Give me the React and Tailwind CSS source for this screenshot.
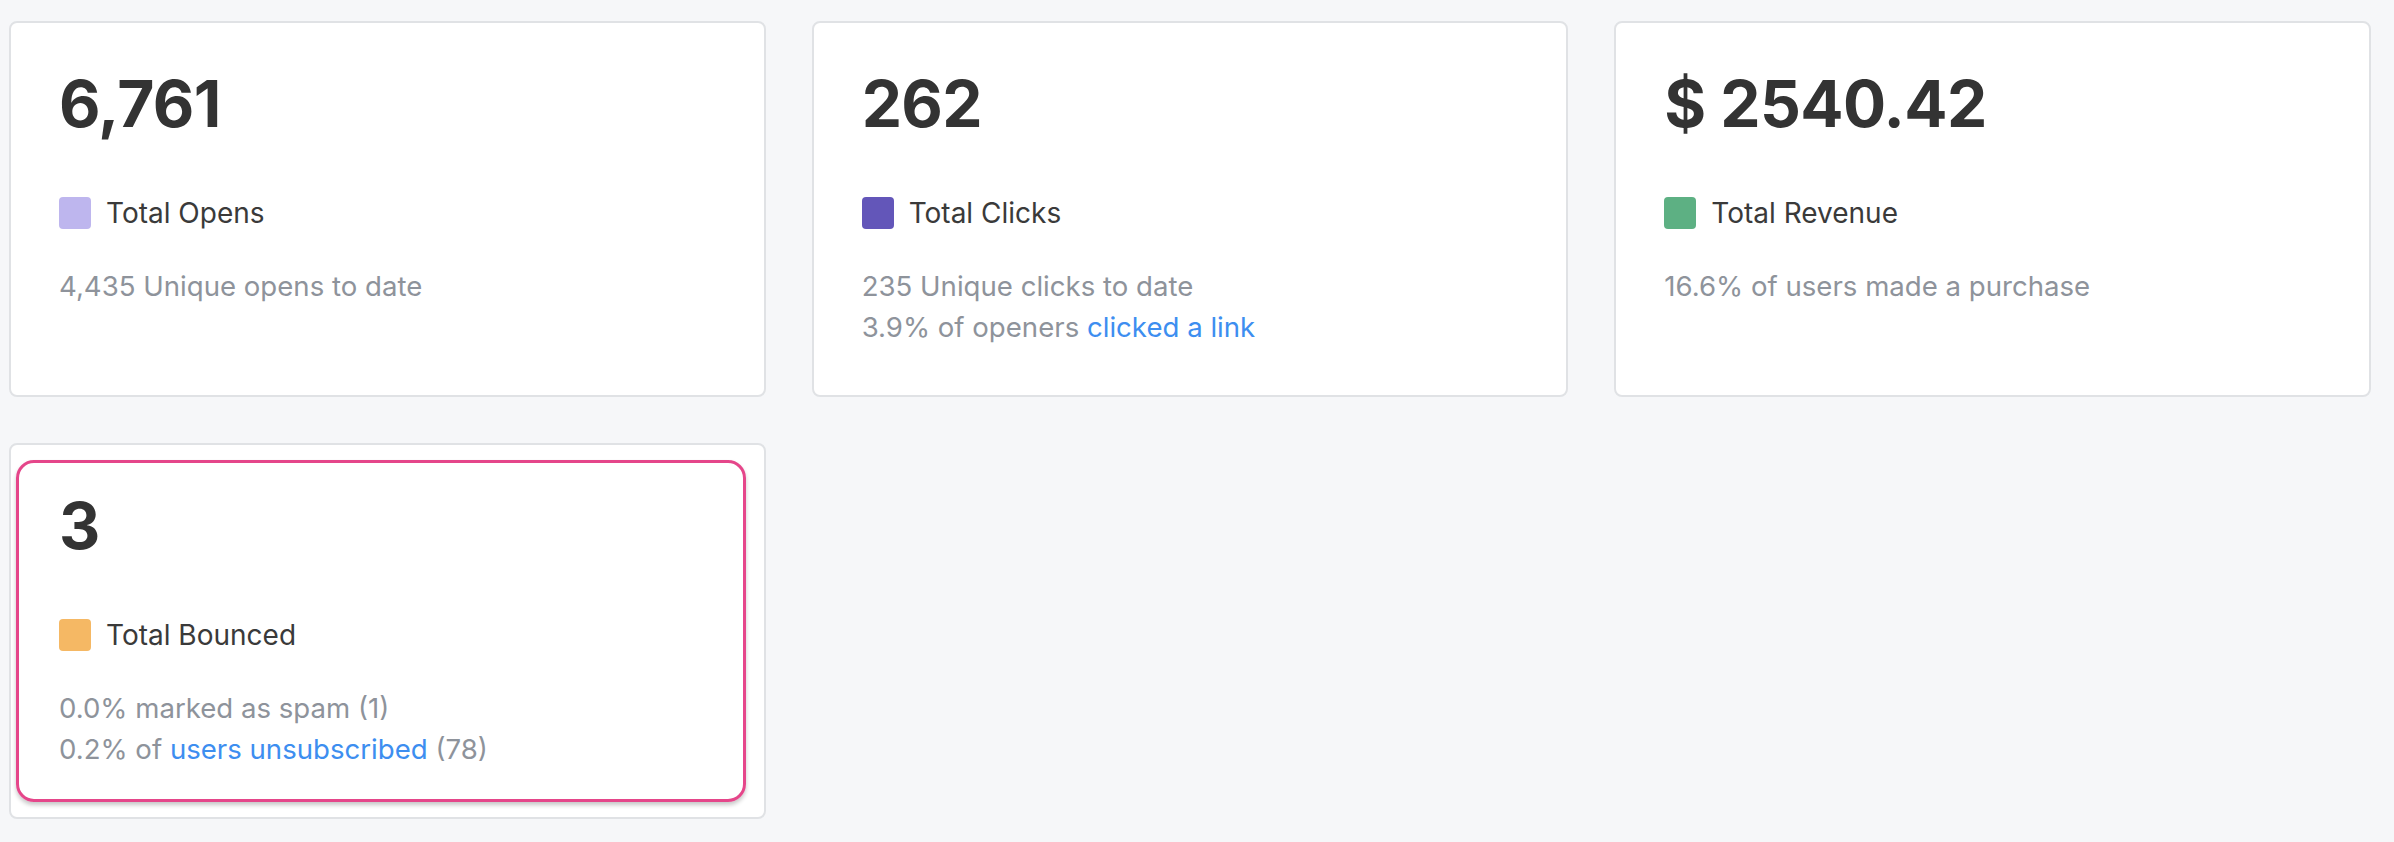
const cards = [
  {
    value: "6,761",
    label: "Total Opens",
    swatch: "bg-[#beb6ee]",
    lines: [[{ text: "4,435 Unique opens to date" }]],
  },
  {
    value: "262",
    label: "Total Clicks",
    swatch: "bg-[#6356b9]",
    lines: [
      [{ text: "235 Unique clicks to date" }],
      [{ text: "3.9% of openers " }, { text: "clicked a link", link: true }],
    ],
  },
  {
    value: "$ 2540.42",
    label: "Total Revenue",
    swatch: "bg-[#5db083]",
    lines: [[{ text: "16.6% of users made a purchase" }]],
  },
  {
    value: "3",
    label: "Total Bounced",
    swatch: "bg-[#f5b864]",
    highlighted: true,
    lines: [
      [{ text: "0.0% marked as spam (1)" }],
      [
        { text: "0.2% of " },
        { text: "users unsubscribed", link: true },
        { text: " (78)" },
      ],
    ],
  },
];

function StatCard({ card }) {
  return (
    <div className="relative h-[376px] rounded-lg border-2 border-[#e0e2e5] bg-white pl-[48px] pt-[49px]">
      {/* highlight outline drawn over the card */}
      {card.highlighted && (
        <div className="pointer-events-none absolute left-[5px] right-[18px] top-[15px] bottom-[15px] rounded-[18px] border-[3px] border-[#e5468a] shadow-[0_3px_4px_rgba(0,0,0,0.22)]" />
      )}
      <div className="text-[64px] font-bold leading-none tracking-[-0.6px] text-[#333333]">
        {card.value}
      </div>
      <div className="mt-[61px] flex items-center gap-[15px]">
        <span className={`h-[32px] w-[32px] rounded-[4px] ${card.swatch}`} />
        <span className="text-[28px] leading-none text-[#3a3a3a]">{card.label}</span>
      </div>
      <div className="mt-[37px] text-[27.6px] leading-[41px] text-[#8e939b]">
        {card.lines.map((line, i) => (
          <div key={i}>
            {line.map((part, j) =>
              part.link ? (
                <a key={j} className="text-[#3d8ef0]">{part.text}</a>
              ) : (
                <span key={j}>{part.text}</span>
              )
            )}
          </div>
        ))}
      </div>
    </div>
  );
}

export default function App() {
  return (
    <div className="min-h-[842px] bg-[#f6f7f9] pl-[9px] pr-[23px] pt-[21px] font-['Inter',sans-serif]">
      <div className="grid grid-cols-3 gap-[46px]">
        {cards.map((card) => (
          <StatCard key={card.label} card={card} />
        ))}
      </div>
    </div>
  );
}
